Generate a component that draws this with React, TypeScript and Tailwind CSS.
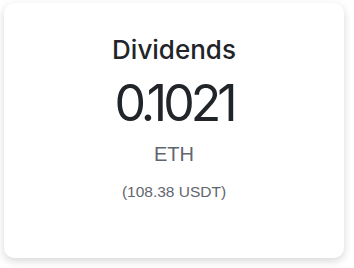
export default function App() {
  return (
    <div className="min-h-screen bg-white pl-[4px] pt-[3px]">
      <div className="flex h-[255px] w-[340px] flex-col items-center rounded-[10px] bg-white pt-[31px] shadow-[0_3px_8px_rgba(0,0,0,0.16)]">
        <h2 className="font-['Inter',sans-serif] text-[26px] font-medium leading-[32px] text-[#212529]">
          Dividends
        </h2>
        <div className="mt-[7px] font-['Inter',sans-serif] text-[50px] font-normal leading-[60px] tracking-[-4px] text-[#212529]">
          0.1021
        </div>
        <div className="mt-[9px] font-['Liberation_Sans',Arial,sans-serif] text-[20px] leading-[24px] text-[#5f666d]">
          ETH
        </div>
        <div className="mt-[16px] font-['Liberation_Sans',Arial,sans-serif] text-[15.5px] leading-[20px] text-[#5f666d]">
          (108.38 USDT)
        </div>
      </div>
    </div>
  );
}
